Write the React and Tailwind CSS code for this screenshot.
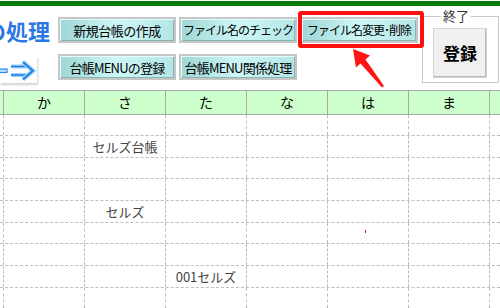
import React from 'react'

const jp = { fontFamily: '"Noto Sans CJK JP", "Noto Sans", sans-serif' }

const headers = ['', 'か', 'さ', 'た', 'な', 'は', 'ま', '']
const rowHeights = [21, 22, 21, 22, 22, 21, 22, 22, 21]
const cellText = { '1-2': 'セルズ台帳', '4-2': 'セルズ', '7-3': '001セルズ' }

function CyanButton({ children, text = 'text-[13px] tracking-[-0.5px]' }) {
    return (
        <button
            className={`w-[118px] h-[26px] border-2 border-[#c6c6c6] bg-gradient-to-r from-[#9fd6d6] via-[#cdf7f7] to-[#b4e6e6] ${text} leading-none text-black whitespace-nowrap shadow-[inset_1px_1px_0_#e8ffff,inset_-1px_-1px_0_#86b4b4] flex items-center justify-center`}
        >
            {children}
        </button>
    )
}

export default function App() {
    return (
        <div className="relative w-[500px] h-[308px] overflow-hidden bg-white" style={jp}>
            {/* top green bar */}
            <div className="mt-[1px] h-[5px] bg-[#087a08]"></div>

            {/* header area */}
            <div className="h-[84px] flex">
                <div className="w-[58px] flex flex-col">
                    <div className="mt-[11px] ml-[-16px] text-[22px] font-bold leading-[27px] text-[#2a78e4] whitespace-nowrap">
                        の処理
                    </div>
                    <div className="mt-[12px] w-[37px] h-[27px] bg-white shadow-[1px_2px_2px_rgba(0,0,0,0.18)]">
                        <svg width="37" height="27" viewBox="0 0 37 27">
                            <rect x="-1" y="13" width="8" height="3.5" fill="#bfe0ff" stroke="#2a86e6" strokeWidth="1.2" />
                            <path d="M11 10.5 H27 M11 19 H27" stroke="#9fd0ff" strokeWidth="4" fill="none" />
                            <path d="M11 10.5 H27 M11 19 H27" stroke="#1f7fe0" strokeWidth="1.6" fill="none" />
                            <path d="M23 6 L33 14.7 L23 23.5" stroke="#9fd0ff" strokeWidth="4.5" fill="none" />
                            <path d="M23 6 L33 14.7 L23 23.5" stroke="#1f7fe0" strokeWidth="1.8" fill="none" />
                        </svg>
                    </div>
                </div>

                <div className="w-[364px] pt-[11px] flex flex-col gap-[11px]">
                    <div className="flex gap-[3px]">
                        <CyanButton>新規台帳の作成</CyanButton>
                        <CyanButton text="text-[12px] tracking-[-1px]">ファイル名のチェック</CyanButton>
                        <CyanButton text="text-[12px] tracking-[-1px]">ファイル名変更･削除</CyanButton>
                    </div>
                    <div className="flex gap-[3px]">
                        <CyanButton text="text-[13px] tracking-[-0.8px]">台帳MENUの登録</CyanButton>
                        <CyanButton text="text-[13px] tracking-[-0.8px]">台帳MENU関係処理</CyanButton>
                    </div>
                </div>

                <fieldset className="mt-[2px] w-[77px] h-[75px] border border-[#c8c8c8] pl-[10px]">
                    <legend className="ml-[8px] px-[2px] text-[13px] leading-[16px] text-[#333]">終了</legend>
                    <button className="mt-[4px] w-[54px] h-[50px] bg-[#f0f0f0] border border-[#d4d4d4] shadow-[inset_-1px_-1px_0_#b8b8b8] text-[17px] font-bold text-black">
                        登録
                    </button>
                </fieldset>
            </div>

            {/* table */}
            <div className="grid grid-cols-[4px_repeat(6,81px)_1fr] border-t border-b border-[#a8a8a8] bg-[#ccffcc] h-[25px]">
                {headers.map((h, i) => (
                    <div
                        key={i}
                        className={`${i < 7 ? 'border-r border-[#a8a8a8]' : ''} flex items-center justify-center text-[14px] text-black`}
                    >
                        {h}
                    </div>
                ))}
            </div>
            {rowHeights.map((rh, r) => (
                <div
                    key={r}
                    className="grid grid-cols-[4px_repeat(6,81px)_1fr] border-b border-dashed border-[#bdbdbd]"
                    style={{ height: rh }}
                >
                    {headers.map((_, c) => (
                        <div
                            key={c}
                            className={`${c < 7 ? 'border-r border-dashed border-[#bdbdbd]' : ''} flex items-center justify-center text-[13px] text-[#444] whitespace-nowrap`}
                        >
                            {cellText[`${r}-${c}`] || ''}
                        </div>
                    ))}
                </div>
            ))}

            {/* stray red mark */}
            <div className="absolute left-[365px] top-[230px] w-[1px] h-[3px] bg-[#e02020]"></div>

            {/* annotation: red box + arrow */}
            <div className="absolute left-[298px] top-[11px] w-[126px] h-[37px] border-4 border-[#ff1010] rounded-[3px]"></div>
            <svg className="absolute left-0 top-0" width="500" height="308" viewBox="0 0 500 308">
                <polygon
                    points="353,49 370,55.5 365.5,59.5 384,86 382,87.5 360.5,63.5 356,67.5"
                    fill="#ff1414"
                />
            </svg>
        </div>
    )
}
